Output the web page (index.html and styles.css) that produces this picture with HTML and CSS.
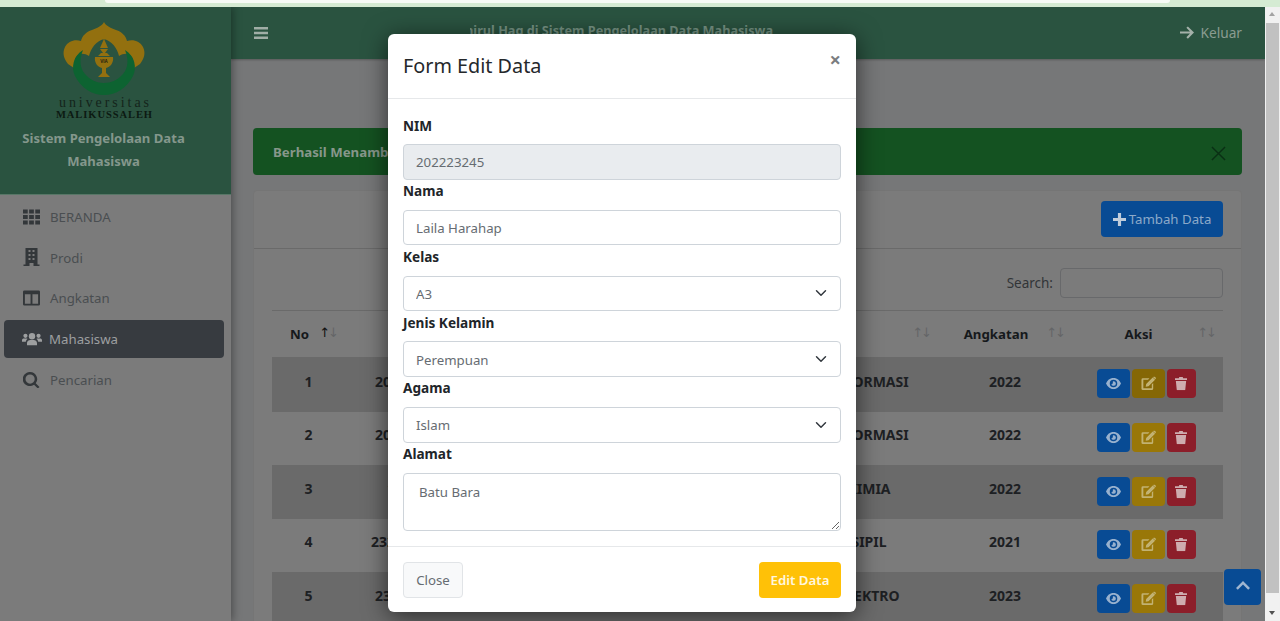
FILE: index.html
```html
<!DOCTYPE html>
<html lang="id">
<head>
<meta charset="utf-8">
<title>Sistem Pengelolaan Data Mahasiswa</title>
<link rel="stylesheet" href="styles.css">
</head>
<body>
<div class="chrome"><div class="chrome-bar"></div></div>
<div class="viewport">
  <div class="page">
    <aside class="sidebar">
      <div class="brand">
        <svg class="logo" viewBox="0 0 100 102" width="100" height="102">
          <path fill="#93700f" d="M49 2C47 6 42 8 37 10C31 12 27 16 26 21C20 19 13 21 10 27C7 33 9 39 13 44L22 50C19 44 19 40 21 37C24 33 29 33 34 36C36 28 41 21 49 19C57 21 62 28 64 36C69 33 74 33 77 37C79 40 79 44 76 50L85 44C89 39 91 33 88 27C85 21 78 19 72 21C71 16 67 12 61 10C56 8 51 6 49 2Z"/>
          <path fill="#0d6331" d="M28 30C18 36 16 48 20 56C26 68 37 75 49 75C61 75 72 68 78 56C82 48 80 36 70 30C74 40 73 48 68 54C63 60 56 63 49 63C42 63 35 60 30 54C25 48 24 40 28 30Z"/>
          <path fill="#93700f" d="M48.500 12H49.500V20L53 28H45L48.500 20ZM45 29H53L50 33H52L55 36H43L46 33H48ZM40 37H58C59 43 55 47 51 48V53L55 57H43L47 53V48C43 47 39 43 40 37Z"/>
          <text class="logo-mark" x="49" y="42.500" text-anchor="middle">VIA</text>
          <text class="logo-word" x="49" y="87" text-anchor="middle" textLength="90">universitas</text>
          <text class="logo-name" x="49" y="98" text-anchor="middle" textLength="96">MALIKUSSALEH</text>
        </svg>
        <div class="brand-title">Sistem Pengelolaan Data<br>Mahasiswa</div>
      </div>
      <nav class="nav">
        <a class="nav-item"><svg class="nav-icon" viewBox="0 0 18 16"><path d="M0 0h5v4.300H0zM6.500 0h5v4.300h-5zM13 0h5v4.300h-5zM0 5.800h5v4.300H0zM6.500 5.800h5v4.300h-5zM13 5.800h5v4.300h-5zM0 11.700h5V16H0zM6.500 11.700h5V16h-5zM13 11.700h5V16h-5z"/></svg>BERANDA</a>
        <a class="nav-item"><svg class="nav-icon tall" viewBox="0 0 16 18"><path fill-rule="evenodd" d="M2 0h12v16.500h2V18h-6v-3H6v3H0v-1.500h2zM5 2v2h2V2zM9 2v2h2V2zM5 6v2h2V6zM9 6v2h2V6zM5 10v2h2v-2zM9 10v2h2v-2z"/></svg>Prodi</a>
        <a class="nav-item"><svg class="nav-icon" viewBox="0 0 18 16"><path fill-rule="evenodd" d="M1.500 0h15A1.500 1.500 0 0 1 18 1.500v13a1.500 1.500 0 0 1-1.500 1.500h-15A1.500 1.500 0 0 1 0 14.500v-13A1.500 1.500 0 0 1 1.500 0zM2 4v10h6V4zM10 4v10h6V4z"/></svg>Angkatan</a>
        <a class="nav-item active"><svg class="nav-icon" viewBox="0 0 22 16"><circle cx="11" cy="5" r="3.500"/><circle cx="3.800" cy="4.500" r="2.300"/><circle cx="18.200" cy="4.500" r="2.300"/><path d="M5.500 15v-2.500C5.500 10 7.500 9 9 9h4c1.500 0 3.500 1 3.500 3.500V15zM0 11V9.500C0 8.200 1 7.500 2 7.500h3c.4 0 .8.100 1 .4C5 8.700 4.300 10 4.200 11zM22 11V9.500c0-1.300-1-2-2-2h-3c-.4 0-.8.100-1 .4 1 .8 1.700 2.100 1.800 3.100z"/></svg>Mahasiswa</a>
        <a class="nav-item"><svg class="nav-icon" viewBox="0 0 18 17"><path fill-rule="evenodd" d="M7.500 0a7.500 7.500 0 0 1 6 12l4 4-1.800 1.500-4-4A7.500 7.500 0 1 1 7.500 0zm0 2.600a4.900 4.900 0 1 0 0 9.800 4.900 4.900 0 0 0 0-9.800z"/></svg>Pencarian</a>
      </nav>
    </aside>
    <div class="main">
      <header class="topbar">
        <svg class="bars" viewBox="0 0 14 12"><path d="M0 0h14v2.400H0zM0 4.800h14v2.400H0zM0 9.600h14V12H0z"/></svg>
        <div class="welcome">Selamat Datang Amirul Haq di Sistem Pengelolaan Data Mahasiswa</div>
        <a class="logout"><svg class="logout-icon" viewBox="0 0 16 14"><path d="M9 0l7 7-7 7-1.700-1.700 4.100-4.100H0V5.800h11.400L7.300 1.700z"/></svg>Keluar</a>
      </header>
      <section class="content">
        <div class="alert"><span>Berhasil Menambahkan Data Mahasiswa</span>
          <svg class="alert-close" viewBox="0 0 16 16"><path d="M1 1l14 14M15 1L1 15" stroke="#0a2f14" stroke-width="1.500" fill="none"/></svg>
        </div>
        <div class="card">
          <div class="card-head">
            <button class="btn-add"><svg class="plus" viewBox="0 0 14 14"><path d="M5.300 0h3.400v5.300H14v3.400H8.700V14H5.300V8.700H0V5.300h5.300z"/></svg>Tambah Data</button>
          </div>
          <div class="card-body">
            <div class="search"><label>Search:</label><span class="search-box"></span></div>
            <table class="table">
              <colgroup><col class="c-no"><col class="c-nim"><col class="c-nama"><col class="c-prodi"><col class="c-ang"><col class="c-aksi"></colgroup>
              <thead>
                <tr><th class="sorted">No<span class="sort"><b>↑</b>↓</span></th><th>NIM<span class="sort">↑↓</span></th><th>Nama<span class="sort">↑↓</span></th><th>Prodi<span class="sort">↑↓</span></th><th>Angkatan<span class="sort">↑↓</span></th><th>Aksi<span class="sort">↑↓</span></th></tr>
              </thead>
              <tbody>
                <tr class="r1"><td>1</td><td>202223245</td><td>Laila Harahap</td><td>SISTEM INFORMASI</td><td>2022</td><td class="acts"><span class="act blue"><svg viewBox="0 0 16 12"><use href="#eye"/></svg></span><span class="act gold dark"><svg viewBox="0 0 16 15"><use href="#edit"/></svg></span><span class="act red"><svg viewBox="0 0 14 16"><use href="#trash"/></svg></span></td></tr>
                <tr class="r2"><td>2</td><td>202223246</td><td>Rina Safitri</td><td>SISTEM INFORMASI</td><td>2022</td><td class="acts"><span class="act blue"><svg viewBox="0 0 16 12"><use href="#eye"/></svg></span><span class="act gold"><svg viewBox="0 0 16 15"><use href="#edit"/></svg></span><span class="act red"><svg viewBox="0 0 14 16"><use href="#trash"/></svg></span></td></tr>
                <tr class="r3"><td>3</td><td>120223</td><td>Fadli Rahman</td><td>TEKNIK KIMIA</td><td>2022</td><td class="acts"><span class="act blue"><svg viewBox="0 0 16 12"><use href="#eye"/></svg></span><span class="act gold"><svg viewBox="0 0 16 15"><use href="#edit"/></svg></span><span class="act red"><svg viewBox="0 0 14 16"><use href="#trash"/></svg></span></td></tr>
                <tr class="r4"><td>4</td><td>2322324501</td><td>Dewi Lestari</td><td>TEKNIK SIPIL</td><td>2021</td><td class="acts"><span class="act blue"><svg viewBox="0 0 16 12"><use href="#eye"/></svg></span><span class="act gold"><svg viewBox="0 0 16 15"><use href="#edit"/></svg></span><span class="act red"><svg viewBox="0 0 14 16"><use href="#trash"/></svg></span></td></tr>
                <tr class="r5"><td>5</td><td>232232450</td><td>Andi Saputra</td><td>TEKNIK ELEKTRO</td><td>2023</td><td class="acts"><span class="act blue"><svg viewBox="0 0 16 12"><use href="#eye"/></svg></span><span class="act gold"><svg viewBox="0 0 16 15"><use href="#edit"/></svg></span><span class="act red"><svg viewBox="0 0 14 16"><use href="#trash"/></svg></span></td></tr>
              </tbody>
            </table>
          </div>
        </div>
      </section>
    </div>
    <button class="to-top"><svg viewBox="0 0 14 9"><path d="M7 0l7 7-1.800 1.800L7 3.600 1.800 8.800 0 7z"/></svg></button>
    <div class="modal">
      <div class="modal-head"><h5>Form Edit Data</h5><span class="modal-x">×</span></div>
      <form class="modal-body">
        <label class="lbl lbl-first">NIM</label>
        <input class="field" value="202223245" disabled>
        <label class="lbl">Nama</label>
        <input class="field" value="Laila Harahap">
        <label class="lbl">Kelas</label>
        <select class="field sel"><option>A3</option></select>
        <label class="lbl">Jenis Kelamin</label>
        <select class="field sel"><option>Perempuan</option></select>
        <label class="lbl">Agama</label>
        <select class="field sel"><option>Islam</option></select>
        <label class="lbl">Alamat</label>
        <textarea class="field area">Batu Bara</textarea>
      </form>
      <div class="modal-foot"><button class="btn-close">Close</button><button class="btn-edit">Edit Data</button></div>
    </div>
  </div>
  <div class="scrollbar">
    <span class="sb-up"></span>
    <span class="sb-thumb"></span>
    <span class="sb-down"></span>
  </div>
</div>
<svg class="defs" width="0" height="0">
  <symbol id="eye" viewBox="0 0 16 12"><path fill-rule="evenodd" d="M8 0c3.500 0 6.500 2.300 8 6-1.500 3.700-4.500 6-8 6s-6.500-2.300-8-6c1.500-3.700 4.500-6 8-6zm0 2a4 4 0 1 0 0 8 4 4 0 0 0 0-8zm0 1.500a2.500 2.500 0 1 1-2.400 3.200c.8.300 2-.4 1.700-2.900.2-.2.400-.3.700-.3z"/></symbol>
  <symbol id="edit" viewBox="0 0 16 15"><path d="M2 2h7L7.500 3.500H2.500v9h9v-4L13 7v6a1.500 1.500 0 0 1-1.500 1.500h-9.500A1.500 1.500 0 0 1 .5 13V3.500A1.500 1.500 0 0 1 2 2z"/><path d="M12.500 1L15 3.500 8 10.500l-3 .5.500-3zM13.300.3c.4-.4 1-.4 1.400 0l.9.9c.4.4.4 1 0 1.400l-.4.4-2.300-2.300z"/></symbol>
  <symbol id="trash" viewBox="0 0 14 16"><path d="M1 5h12l-1 10a1 1 0 0 1-1 1H3a1 1 0 0 1-1-1zM0 2h4.500l.5-1.500h4L9.500 2H14v2H0z"/></symbol>
</svg>
</body>
</html>
```

FILE: styles.css
```css
* { box-sizing: border-box; }
html, body { margin: 0; height: 621px; overflow: hidden; }
body { font-family: "Noto Sans", "Liberation Sans", sans-serif; font-size: 13.250px; color: #212529; background: #767778; }

.chrome { height: 7px; background: #d5ebd3; }
.chrome-bar { height: 3px; margin: 0 110px 0 105px; background: #f7fbf6; border-radius: 0 0 6px 6px; }

.viewport { display: flex; height: 614px; }
.page { position: relative; flex: 1; display: flex; min-width: 0; overflow: hidden; background: #767778; }

.sidebar { width: 231px; flex: none; background: #7b7b7b; box-shadow: 2px 0 8px rgba(0,0,0,.35); z-index: 1; }
.brand { height: 188px; background: #2a5340; border-bottom: 1px solid #587767; padding: 13px 24px 0 0; text-align: center; }
.logo { display: block; margin: 0 auto 0 55px; }
.logo-mark { font-family: "Liberation Sans", sans-serif; font-size: 4.500px; font-weight: bold; fill: #1c1a10; }
.logo-word { font-family: "Liberation Serif", serif; font-size: 14px; fill: #14241b; }
.logo-name { font-family: "Liberation Serif", serif; font-size: 10.500px; font-weight: bold; fill: #0c1a12; }
.brand-title { margin-top: 5px; font-size: 13.100px; font-weight: 700; line-height: 23px; color: #84978c; }

.nav { padding: 2.800px 7px 0 4px; display: flex; flex-direction: column; gap: 2.800px; }
.nav-item { height: 38px; display: flex; align-items: center; padding-left: 19px; border-radius: 4px; color: #4a4e51; }
.nav-icon { width: 17px; height: 16px; margin-right: 10px; fill: #33373a; flex: none; }
.nav-icon.tall { height: 18px; margin-top: -1px; }
.nav-item.active { background: #373b40; color: #9d9fa0; }
.nav-item.active .nav-icon { width: 20px; margin: 0 7px 0 -1px; fill: #9d9fa0; }

.main { flex: 1; min-width: 0; display: flex; flex-direction: column; }
.topbar { height: 52px; flex: none; display: flex; align-items: center; background: #2a5340; padding: 0 23px 0 23px; box-shadow: 0 1px 2px rgba(0,0,0,.25); }
.bars { width: 14px; height: 12px; fill: #a0aea6; margin-top: -1px; flex: none; }
.welcome { width: 303px; flex: none; margin: -6px 0 0 202px; font-size: 12.700px; white-space: nowrap; overflow: hidden; direction: rtl; font-weight: 700; color: #769283; }
.logout { margin-left: auto; display: flex; align-items: center; font-size: 13.700px; color: #8a9c91; margin-top: -1px; }
.logout-icon { width: 14px; height: 13px; fill: #a4b1a9; margin-right: 6px; }

.content { padding: 69px 23px 0 22px; }
.alert { height: 47px; display: flex; align-items: center; justify-content: space-between; padding: 0 16px 0 20px; background: #145221; border-radius: 4px; font-weight: 700; color: #87978b; }
.alert-close { width: 15px; height: 15px; margin-top: 4px; }

.card { margin-top: 15px; background: #7b7b7b; border: 1px solid #757575; border-radius: 4px; }
.card-head { height: 58px; border-bottom: 1px solid #6a6a6a; padding: 10px 18px 0 0; display: flex; justify-content: flex-end; align-items: flex-start; }
.btn-add { width: 122px; height: 36px; border: 0; border-radius: 4px; background: #084b94; color: #8ca9c9; font: inherit; display: flex; align-items: center; justify-content: center; gap: 3px; padding: 0; }
.plus { width: 13px; height: 13px; fill: #bfccdb; }

.card-body { padding: 19px 18px 0; }
.search { display: flex; justify-content: flex-end; align-items: center; gap: 7px; height: 30px; font-size: 13.500px; color: #323538; }
.search-box { width: 163px; height: 30px; border: 1px solid #68696b; border-radius: 4px; background: #7b7b7b; }

.table { width: 951px; margin-top: 12px; border-collapse: collapse; table-layout: fixed; border-top: 1px solid #6a6a6a; }
.c-no { width: 73px; } .c-nim { width: 132px; } .c-nama { width: 268px; } .c-prodi { width: 193px; } .c-ang { width: 134px; } .c-aksi { width: 151px; }
.table th { position: relative; height: 46px; padding: 1px 18px 0 0; text-align: center; font-weight: 700; color: #16191c; white-space: nowrap; }
.table td { padding: 0 0 7px; text-align: center; font-size: 14px; font-weight: 700; color: #1d2023; white-space: nowrap; }
.table .r1 { height: 55px; }
.table .r1 td { padding-bottom: 6px; }
.table .r2 { height: 53px; }
.table .r3 { height: 54px; }
.table .r4 { height: 53px; }
.table .r5 { height: 54px; }
.r1, .r3, .r5 { background: #6a6a6a; }
.sort { position: absolute; right: 8px; top: 14px; font-size: 13px; font-weight: 400; color: #646567; line-height: 16px; letter-spacing: -2px; font-family: "DejaVu Sans", sans-serif; }
.sort b { color: #111; font-weight: 400; }
.table .r1 td.acts, .table td.acts { padding: 0 3px 1px 0; font-size: 0; }
.act { display: inline-flex; width: 33px; height: 29px; margin-right: 2px; border-radius: 4px; align-items: center; justify-content: center; vertical-align: middle; }
.act:last-child { width: 29px; margin-right: 0; }
.act svg { width: 15px; height: 15px; }
.blue { background: #084b94; }
.blue svg { fill: #98b1ce; }
.gold { background: #997708; }
.gold.dark { background: #856705; }
.gold svg { fill: #c2b272; }
.red { background: #8c1e2a; }
.red svg { width: 12px; fill: #ceacaf; }

.to-top { position: absolute; left: 1224px; top: 562px; width: 37px; height: 36px; padding: 0; border: 0; border-radius: 4px; background: #084b94; z-index: 3; display: flex; align-items: center; justify-content: center; }
.to-top svg { width: 14px; height: 9px; fill: #a0b6d1; margin-top: -3px; }

.modal { position: absolute; left: 388px; top: 27px; width: 468px; height: 578px; background: #fff; border-radius: 6px; box-shadow: 0 4px 24px rgba(0,0,0,.6); z-index: 4; display: flex; flex-direction: column; }
.modal-head { height: 65px; flex: none; border-bottom: 1px solid #e6e8ea; padding: 0 15px; display: flex; justify-content: space-between; }
.modal-head h5 { margin: 19px 0 0; font-size: 19.800px; line-height: 26px; font-weight: 400; color: #25282b; }
.modal-x { margin: 14px 0 0; font-size: 20px; line-height: 24px; font-weight: 700; color: #7a7d80; }
.modal-body { flex: 1; display: flex; flex-direction: column; padding: 17.500px 15px 0; }
.lbl { height: 18px; line-height: 18px; font-size: 13.600px; font-weight: 700; color: #212529; margin: 2.600px 0 9.700px; }
.lbl-first { margin: 0 0 9.500px; }
.field { display: block; width: 100%; height: 35.500px; flex: none; padding: 1px 12px 0; border: 1px solid #ced4da; border-radius: 4px; background: #fff; color: #666c72; font: inherit; }
.field:disabled { background: #e9ecef; opacity: 1; color: #666c72; }
.sel { appearance: none; background-image: url("data:image/svg+xml,%3Csvg xmlns='http://www.w3.org/2000/svg' viewBox='0 0 16 16'%3E%3Cpath fill='none' stroke='%23343a40' stroke-linecap='round' stroke-linejoin='round' stroke-width='2' d='M2 5l6 6 6-6'/%3E%3C/svg%3E"); background-repeat: no-repeat; background-position: right 13px center; background-size: 12px 12px; }
.area { height: 58px; padding: 9px 15px; }
.modal-foot { height: 66px; flex: none; border-top: 1px solid #e6e8ea; padding: 15px 15px 0; display: flex; justify-content: space-between; align-items: flex-start; }
.btn-close { width: 60px; height: 36px; padding: 0; border: 1px solid #e1e4e7; border-radius: 4px; background: #f8f9fa; color: #666c72; font: inherit; }
.btn-edit { width: 82px; height: 36px; padding: 0; border: 0; border-radius: 4px; background: #ffc107; color: #fff7e0; font: inherit; font-weight: 600; }

.scrollbar { width: 15px; flex: none; background: #f1f1f1; display: flex; flex-direction: column; align-items: center; }
.sb-up, .sb-down { height: 16px; flex: none; position: relative; width: 100%; }
.sb-up::after { content: ""; position: absolute; left: 4px; top: 5px; border: 3.500px solid transparent; border-bottom: 4px solid #a3a3a3; border-top: 0; }
.sb-down::after { content: ""; position: absolute; left: 4px; top: 6px; border: 3.500px solid transparent; border-top: 4px solid #505050; border-bottom: 0; }
.sb-thumb { width: 13px; flex: 1; background: #c1c1c1; margin-bottom: 12px; }
.defs { position: absolute; }
```
